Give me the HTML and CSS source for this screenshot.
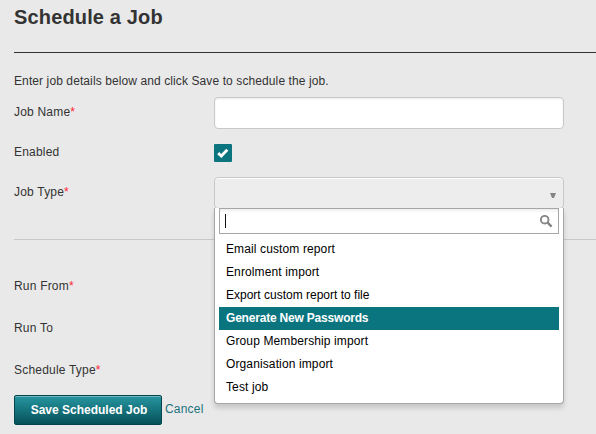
FILE: index.html
```html
<!DOCTYPE html>
<html lang="en">
<head>
<meta charset="utf-8">
<title>Schedule a Job</title>
<link rel="stylesheet" href="styles.css">
</head>
<body>
<main class="page">
  <h1 class="title">Schedule a Job</h1>
  <p class="intro"><span>Enter job details below and click Save to schedule the job.</span></p>
  <form class="form">
    <div class="row row-name">
      <label class="label">Job Name<span class="req">*</span></label>
      <div class="input"></div>
    </div>
    <div class="row row-enabled">
      <label class="label">Enabled</label>
      <div class="check">
        <svg width="18" height="18" viewBox="0 0 18 18"><path d="M4.2 9.2L7.3 12L13.3 5.7" fill="none" stroke="#fff" stroke-width="2.9"/></svg>
      </div>
    </div>
    <div class="row row-type">
      <label class="label">Job Type<span class="req">*</span></label>
      <div class="select">
        <svg class="arrow" width="6" height="5" viewBox="0 0 6 5"><path d="M0 0H6L4 5H2Z" fill="#858585"/></svg>
        <div class="menu">
          <div class="search">
            <span class="caret"></span>
            <svg width="14" height="14" viewBox="0 0 14 14"><circle cx="5.7" cy="4.7" r="3.8" fill="none" stroke="#858585" stroke-width="1.9"/><path d="M8.4 7.4L12.6 11.6" stroke="#858585" stroke-width="2.4"/></svg>
          </div>
          <ul class="options">
            <li>Email custom report</li>
            <li>Enrolment import</li>
            <li class="long">Export custom report to file</li>
            <li class="active">Generate New Passwords</li>
            <li>Group Membership import</li>
            <li>Organisation import</li>
            <li>Test job</li>
          </ul>
        </div>
      </div>
    </div>
    <div class="schedule">
      <label class="label">Run From<span class="req">*</span></label>
      <label class="label">Run To</label>
      <label class="label">Schedule Type<span class="req">*</span></label>
    </div>
    <div class="actions">
      <button class="save" type="button"><span>Save Scheduled Job</span></button>
      <a class="cancel">Cancel</a>
    </div>
  </form>
</main>
</body>
</html>
```
FILE: styles.css
```css
* { box-sizing: border-box; }
body {
  margin: 0;
  height: 434px;
  overflow: hidden;
  background: #e9e9e9;
  color: #333;
  font: 12px/18px "Liberation Sans", Arial, sans-serif;
  letter-spacing: 0.2px;
}
.page { padding-left: 14px; }
.title {
  margin: 0;
  height: 53px;
  padding-top: 5px;
  border-bottom: 1px solid #333;
  font-size: 20px;
  line-height: 24px;
  letter-spacing: 0.15px;
}
.intro { margin: 19px 0 7px; letter-spacing: 0.1px; }
.row { display: flex; align-items: flex-start; }
.label { width: 200px; padding-top: 6px; line-height: 18px; white-space: nowrap; }
.req { color: #f23; }
.row-name { height: 46px; }
.row-enabled { height: 34px; }
.row-enabled .label { padding-top: 0; }
.input {
  width: 350px;
  height: 32px;
  background: #fff;
  border: 1px solid #c8c8c8;
  border-radius: 4px;
  box-shadow: inset 0 1px 2px rgba(0, 0, 0, 0.08);
}
.check {
  width: 18px;
  height: 18px;
  margin-top: 1px;
  background: #0a757f;
  border-radius: 1px;
}
.check svg { display: block; }
.row-type { height: 63px; border-bottom: 1px solid #c8c8c8; }
.select {
  position: relative;
  display: flex;
  justify-content: flex-end;
  width: 350px;
  height: 32px;
  padding: 15px 7px 0 0;
  background: #ededed;
  border: 1px solid #c8c8c8;
  border-radius: 4px;
  box-shadow: inset 0 1px #fff;
}
.menu {
  position: absolute;
  z-index: 1;
  top: 30px;
  left: -1px;
  width: 350px;
  height: 196px;
  padding: 0 4px;
  background: #fff;
  border: 1px solid #a6a6a6;
  border-top: 0;
  border-radius: 0 0 4px 4px;
  box-shadow: 0 4px 5px rgba(0, 0, 0, 0.15);
}
.search {
  display: flex;
  justify-content: space-between;
  height: 26px;
  padding: 6px 5px 0;
  border: 1px solid #a6a6a6;
  background: linear-gradient(#eee 0, #fff 4px);
}
.caret { width: 1px; height: 14px; margin-top: -1px; background: #111; }
.options { list-style: none; margin: 4px 0 0; padding: 0; }
.options li {
  height: 23px;
  padding-left: 7px;
  line-height: 22px;
  color: #000;
  letter-spacing: 0.12px;
}
.options .long { letter-spacing: 0; }
.options .active { background: #0a757f; color: #fff; font-weight: bold; letter-spacing: -0.2px; }
.schedule { display: flex; flex-direction: column; gap: 18px; padding-top: 31px; }
.actions { display: flex; gap: 4px; margin-top: 16px; }
.save {
  width: 148px;
  height: 30px;
  padding: 0 0 0 2px;
  border: 1px solid #04464e;
  border-radius: 2px;
  background: linear-gradient(#2796a0, #055159);
  box-shadow: inset 0 1px #6fb6bd;
  color: #fff;
  font: bold 12px/18px "Liberation Sans", Arial, sans-serif;
  letter-spacing: 0;
}
.cancel { margin: 5px 0 0 -1px; color: #1c737d; }
```
